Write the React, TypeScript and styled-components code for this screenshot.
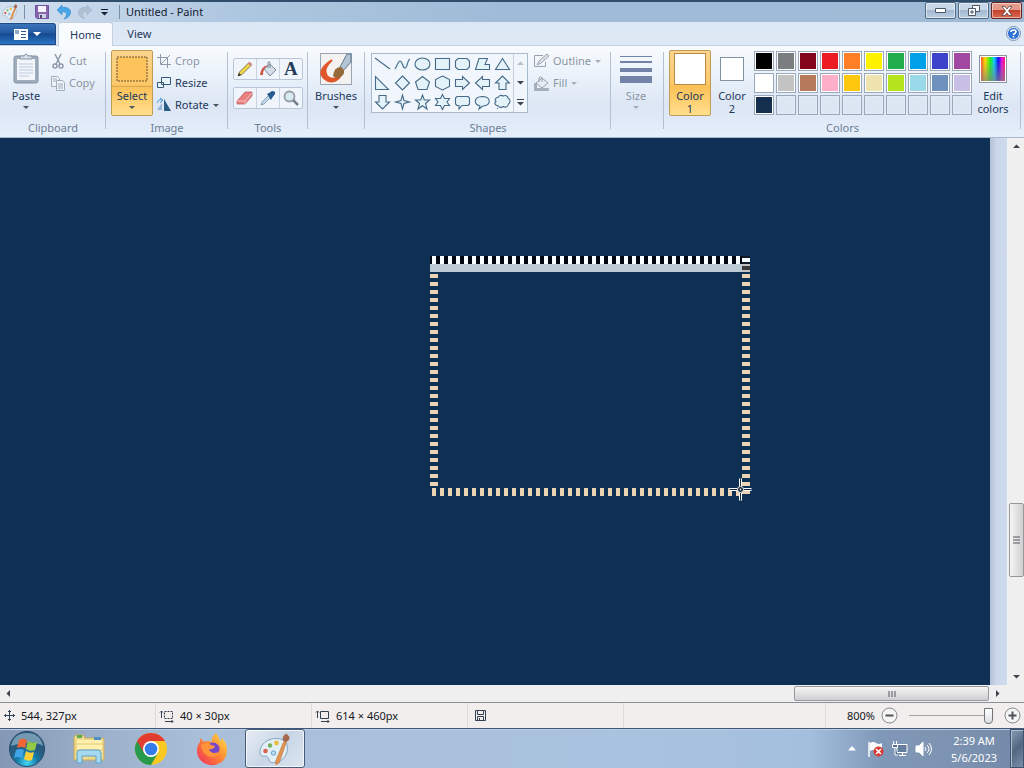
import React from 'react';
import styled, { createGlobalStyle, css } from 'styled-components';

const GlobalStyle = createGlobalStyle`
  *, *::before, *::after { box-sizing: border-box; }
  html, body, #root { height: 100%; margin: 0; }
  body { overflow: hidden; font: 11px/16px "Noto Sans", "Open Sans", sans-serif; color: #1e395b; }
  button, input { font: inherit; color: inherit; margin: 0; padding: 0; }
  button { background: none; border: 0; }
  svg { display: block; flex: none; overflow: visible; }
`;

const Screen = styled.div`
  display: flex;
  flex-direction: column;
  height: 100vh;
  background: #eff0f2;
`;

/* Title bar */
const TitleBar = styled.header`
  display: flex;
  align-items: center;
  height: 22px;
  flex: none;
  padding-left: 2px;
  background: linear-gradient(90deg, rgba(215,228,243,.9), rgba(190,211,233,.5) 22%, rgba(145,175,205,.1) 50%, rgba(160,185,212,.5) 100%), #a0bcd8;
  border-top: 2px solid #304d6c;
`;
const QuickButton = styled.button<{ $w: number }>`
  display: flex;
  align-items: center;
  justify-content: center;
  width: ${p => p.$w}px;
  height: 18px;
`;
const QuickRule = styled.span`
  width: 1px;
  height: 14px;
  background: #7890a9;
  margin: 0 6px;
`;
const Title = styled.h1`
  flex: 1;
  margin: 0;
  font-size: 11px;
  line-height: 18px;
  font-weight: 400;
  color: #13202f;
`;
const WindowButtons = styled.div`
  display: flex;
  align-items: flex-start;
  height: 20px;
  gap: 2px;
  padding-right: 2px;
`;
const WindowButton = styled.button<{ $close?: boolean }>`
  display: flex;
  align-items: center;
  justify-content: center;
  width: 31px;
  height: 17px;
  border: 1px solid #526b87;
  border-radius: 2px;
  box-shadow: inset 0 0 0 1px rgba(255,255,255,.5);
  background: linear-gradient(#c8d8e8 45%, #a2b8d0 50%, #bdd0e3);
  ${p => p.$close && css`
    border-color: #6b2520;
    background: linear-gradient(#e29a8c 45%, #c3402c 50%, #d96a51);
  `}
`;

/* Tabs */
const TabBar = styled.nav`
  display: flex;
  align-items: flex-end;
  height: 24px;
  flex: none;
  background: linear-gradient(#dbe7f4, #e0e9f6);
  border-bottom: 1px solid #c3d0e0;
`;
const FileTab = styled.button`
  display: flex;
  align-items: center;
  justify-content: center;
  gap: 5px;
  width: 56px;
  height: 22px;
  border: 1px solid #1e4a86;
  border-left: 0;
  border-radius: 0 3px 0 0;
  background: linear-gradient(#3a74b8, #2358a0 45%, #164990 50%, #2b75c4);
`;
const Tab = styled.button<{ $active?: boolean }>`
  height: 23px;
  margin-left: 2px;
  padding: 0 11px;
  border-radius: 3px 3px 0 0;
  border: 1px solid transparent;
  border-bottom: 0;
  ${p => p.$active && css`
    margin-bottom: -1px;
    height: 24px;
    border-color: #c3d0e0;
    background: #f9fcff;
  `}
`;
const HelpButton = styled.button`
  margin: 0 3px 4px auto;
`;

/* Ribbon */
const Ribbon = styled.div`
  display: flex;
  height: 92px;
  flex: none;
  padding-top: 3px;
  background: linear-gradient(#f8fbfe, #e9f1fa 35%, #dce6f4 65%, #e5eefb);
  border-bottom: 1px solid #a9b8ca;
`;
const Group = styled.section<{ $w: number }>`
  display: flex;
  flex-direction: column;
  width: ${p => p.$w}px;
  flex: none;
  position: relative;
  &::after {
    content: "";
    position: absolute;
    right: 0;
    top: 3px;
    bottom: 8px;
    width: 1px;
    background: #b3c0d1;
  }
`;
const GroupBody = styled.div<{ $pad?: number; $gap?: number }>`
  display: flex;
  align-items: flex-start;
  height: 71px;
  padding: 1px 0 0 ${p => p.$pad ?? 5}px;
  gap: ${p => p.$gap ?? 4}px;
`;
const GroupLabel = styled.h2`
  margin: 0;
  font-size: 11px;
  line-height: 16px;
  font-weight: 400;
  text-align: center;
  color: #6b7d95;
`;
const BigButton = styled.button<{ $active?: boolean; $muted?: boolean; $w?: number }>`
  display: flex;
  flex-direction: column;
  align-items: center;
  width: ${p => p.$w ?? 42}px;
  height: 66px;
  border: 1px solid transparent;
  border-radius: 2px;
  line-height: 13px;
  ${p => p.$muted && css`color: #8b95a3;`}
  ${p => p.$active && css`
    border-color: #c29b54;
    background: linear-gradient(#fbd48e, #fcc96c 50%, #fbc057 55%, #ffdf8d);
  `}
`;
const BigIcon = styled.span<{ $rule?: boolean }>`
  display: flex;
  align-items: center;
  justify-content: center;
  width: 100%;
  height: 36px;
  margin-bottom: 2px;
  ${p => p.$rule && css`border-bottom: 1px solid #d6a95a;`}
`;
const ButtonCaption = styled.span`
  text-align: center;
  line-height: 13px;
`;
const Arrow = styled.span<{ $muted?: boolean; $light?: boolean }>`
  display: inline-block;
  width: 0;
  height: 0;
  border: ${p => (p.$light ? 4 : 3)}px solid transparent;
  border-bottom: 0;
  border-top-color: ${p => (p.$light ? '#fff' : p.$muted ? '#a5adb8' : '#4c5563')};
`;
const BigArrow = styled(Arrow)`
  margin-top: 4px;
`;
const Stack = styled.div`
  display: flex;
  flex-direction: column;
`;
const SmallButton = styled.button<{ $muted?: boolean }>`
  display: flex;
  align-items: center;
  gap: 4px;
  height: 22px;
  white-space: nowrap;
  ${p => p.$muted && css`color: #8b95a3;`}
`;
const ToolGrid = styled.div`
  display: flex;
  flex-direction: column;
  gap: 7px;
  padding-top: 8px;
`;
const ToolRow = styled.div`
  display: flex;
  border: 1px solid #b8c6d8;
  border-radius: 2px;
  background: #f0f5fb;
`;
const ToolButton = styled.button`
  display: flex;
  align-items: center;
  justify-content: center;
  width: 22px;
  height: 20px;
  & + & { width: 23px; border-left: 1px solid #c9d4e2; }
`;
const BrushFrame = styled.span`
  display: block;
  width: 32px;
  height: 32px;
  border: 1px solid #9aa5b4;
  background: #f4f2f0;
`;
const Gallery = styled.div`
  display: flex;
  width: 157px;
  height: 60px;
  margin-top: 3px;
  border: 1px solid #a9bacd;
  background: #f0f6fc;
`;
const ShapeGrid = styled.div`
  display: grid;
  grid-template-columns: repeat(7, 20px);
  grid-template-rows: repeat(3, 19px);
  flex: 1;
`;
const ShapeButton = styled.button`
  display: flex;
  align-items: center;
  justify-content: center;
`;
const GalleryScroll = styled.div`
  display: grid;
  grid-template-rows: repeat(3, 1fr);
  width: 14px;
  border-left: 1px solid #c3d0de;
`;
const ScrollStep = styled.button`
  display: flex;
  align-items: center;
  justify-content: center;
`;
const ColorChip = styled.span<{ $size: number; $active?: boolean }>`
  width: ${p => p.$size}px;
  height: ${p => p.$size}px;
  border: 1px solid ${p => (p.$active ? '#b88a46' : '#8391a5')};
  background: #fff;
`;
const Palette = styled.div`
  display: grid;
  grid-template-columns: repeat(10, 20px);
  grid-auto-rows: 20px;
  gap: 2px;
  padding: 1px 0 0 1px;
`;
const Swatch = styled.button<{ $color?: string }>`
  border: 1px solid #9aa8ba;
  background: ${p => p.$color ?? '#dde6f3'};
  box-shadow: inset 0 0 0 1px ${p => (p.$color ? '#fff' : '#e3ebf6')};
`;
const Rainbow = styled.span`
  width: 28px;
  height: 28px;
  border: 1px solid #8c939e;
  box-shadow: inset 0 0 0 1px #fff;
  background: linear-gradient(transparent 20%, rgba(128,128,128,.75)), linear-gradient(90deg, #f33, #fd0 20%, #2e2 40%, #1cf 55%, #11e 70%, #e1d 85%, #f24);
`;

/* Work area */
const WorkArea = styled.main`
  display: flex;
  flex: 1;
  min-height: 0;
`;
const Canvas = styled.div`
  position: relative;
  flex: 1;
  overflow: hidden;
  background: #0e3055;
`;
const CanvasDrawing = styled.svg`
  position: absolute;
  left: 430px;
  top: 118px;
`;
const CanvasMargin = styled.div`
  width: 18px;
  border-right: 1px solid #eef3fa;
  background: linear-gradient(90deg, #b2c1d6, #cad6e9 35%, #cfdbed);
`;
const VScroll = styled.div`
  display: flex;
  flex-direction: column;
  align-items: center;
  width: 16px;
  background: #f0f0f1;
`;
const Spacer = styled.div<{ $grow: number }>`
  flex: ${p => p.$grow} 1 0;
`;
const ScrollArrow = styled.button`
  display: flex;
  align-items: center;
  justify-content: center;
  width: 17px;
  height: 17px;
`;
const VThumb = styled.button`
  display: flex;
  align-items: center;
  justify-content: center;
  width: 15px;
  height: 74px;
  border: 1px solid #989898;
  border-radius: 2px;
  background: linear-gradient(90deg, #f5f5f5, #e3e3e4 50%, #cfcfd2);
`;
const HScroll = styled.div`
  display: flex;
  align-items: center;
  height: 17px;
  flex: none;
  padding-right: 18px;
  background: #efeff0;
`;
const HThumb = styled.button`
  display: flex;
  align-items: center;
  justify-content: center;
  width: 195px;
  height: 15px;
  border: 1px solid #989898;
  border-radius: 2px;
  background: linear-gradient(#f5f5f5, #e3e3e4 50%, #cfcfd2);
`;

/* Status bar */
const StatusBar = styled.footer`
  display: flex;
  height: 26px;
  flex: none;
  border-top: 1px solid #898f96;
  background: #f1eeed;
  color: #15181e;
`;
const StatusCell = styled.div<{ $w?: number }>`
  display: flex;
  align-items: center;
  gap: 6px;
  ${p => (p.$w ? css`width: ${p.$w}px;` : css`flex: 1;`)}
  padding-left: 4px;
  border-right: 1px solid #dddcdd;
`;
const ZoomBar = styled.div`
  display: flex;
  align-items: center;
  justify-content: flex-end;
  gap: 6px;
  width: 198px;
  padding-right: 3px;
`;
const ZoomSlider = styled.input`
  appearance: none;
  width: 84px;
  height: 18px;
  margin: 0 5px;
  background: linear-gradient(#a5a5a8, #a5a5a8) center / 100% 1px no-repeat;
  &::-webkit-slider-thumb {
    appearance: none;
    width: 9px;
    height: 16px;
    border: 1px solid #707276;
    border-radius: 1px 1px 5px 5px;
    background: linear-gradient(#fff, #dadcdf);
  }
`;

/* Taskbar */
const Taskbar = styled.footer`
  display: flex;
  align-items: stretch;
  height: 40px;
  flex: none;
  border-top: 1px solid #3d587a;
  box-shadow: inset 0 1px 0 #bdccde;
  background: linear-gradient(90deg, #8497b4, #9bafca 9%, #a9bfda 20%, #a9c2df 60%, #a4bfde 79%, #8098b8 86%, #7c92b0 94%, #7188a8);
`;
const TaskButton = styled.button<{ $active?: boolean; $w: number }>`
  display: flex;
  align-items: center;
  justify-content: center;
  width: ${p => p.$w}px;
  border: 1px solid transparent;
  border-radius: 3px;
  ${p => p.$active && css`
    border-color: #465c78;
    box-shadow: inset 0 0 0 1px rgba(255,255,255,.7);
    background: linear-gradient(135deg, #e7edf5, #c9d6e6 50%, #dce5f0);
  `}
`;
const Tray = styled.div`
  display: flex;
  align-items: center;
  gap: 8px;
  margin-left: auto;
`;
const TrayButton = styled.button`
  display: flex;
  align-items: center;
  justify-content: center;
  width: 16px;
  height: 24px;
`;
const Clock = styled.time`
  width: 68px;
  text-align: center;
  line-height: 17px;
  color: #fff;
`;
const ShowDesktop = styled.button`
  width: 14px;
  height: 39px;
  margin-left: -6px;
  border: 1px solid #3f536d;
  box-shadow: inset 1px 1px 0 #aebccf;
  background: linear-gradient(135deg, #8b9db6, #52667f 50%, #7c90ad);
`;

const PaletteIcon = ({ size }: { size: number }) => (
  <svg width={size} height={size} viewBox="0 0 32 32">
    <path d="M1 21C0 12 8 5 18 5.500c8 .5 12 6 10 13-2 8-9 12.500-16 11-3-1-1-4-4-6-2-1-5 1-7-2.500z" fill="#e3eff7" stroke="#84a5c0" />
    <circle cx="6.500" cy="18" r="2.300" fill="#d6614c" />
    <circle cx="11" cy="12.500" r="2.200" fill="#7ab05c" />
    <circle cx="17.500" cy="10" r="2.400" fill="#e9bf44" />
    <circle cx="14.500" cy="20" r="2.200" fill="#b5def3" stroke="#6ba6cc" />
    <path d="M25 8l2.500 1L20 30l-3 1.500-.5-3z" fill="#e59350" stroke="#b7713c" strokeWidth=".6" />
    <path d="M24 7c-1-3 1-5.500 4-6.500 0 2 3 2 2.500 5-.5 2-3 3.500-4 3.500z" fill="#a5684c" />
  </svg>
);

const Outline = ({ d }: { d: string }) => (
  <svg width="17" height="16" viewBox="0 0 17 16" fill="#e4f3f9" stroke="#466a87" strokeWidth="1.1">
    <path d={d} />
  </svg>
);

const shapes: [string, string][] = [
  ['Line', 'M1 2L16 13'],
  ['Curve', 'M1 13C3 10 4 5 6 5C9 5 8 12 11 12C14 12 13 4 16 3M16 3'],
  ['Oval', 'M1 8a7.5 6 0 0 1 15 0a7.5 6 0 0 1-15 0z'],
  ['Rectangle', 'M1.500 2.500h14v11h-14z'],
  ['Rounded rectangle', 'M4 2.500h9l2.500 2.500v6L13 13.500H4L1.500 11V5z'],
  ['Polygon', 'M5 2.500h8.500l-2.500 6h4.500v5h-14z'],
  ['Triangle', 'M8.500 2.500l7 11h-14z'],
  ['Right triangle', 'M1.500 1.500v13h13z'],
  ['Diamond', 'M8.500 1L15.500 8L8.500 15L1.500 8z'],
  ['Pentagon', 'M8.500 1.500L15.500 7L13 14.500H4L1.500 7z'],
  ['Hexagon', 'M8.500 1L15.500 4.500V11.500L8.500 15L1.500 11.500V4.500z'],
  ['Right arrow', 'M1.500 4.500H8.500V1.500L15.500 8L8.500 14.500V11.500H1.500z'],
  ['Left arrow', 'M15.500 4.500H8.500V1.500L1.500 8L8.500 14.500V11.500H15.500z'],
  ['Up arrow', 'M5 14.500V8H1.500L8.500 1L15.500 8H12V14.500z'],
  ['Down arrow', 'M5 1.500V8H1.500L8.500 15L15.500 8H12V1.500z'],
  ['Four-point star', 'M8.500 1L10 6.500L15.500 8L10 9.500L8.500 15L7 9.500L1.500 8L7 6.500z'],
  ['Five-point star', 'M8.500 1L10.300 6H15.500L11.500 9.500L13 15L8.500 11.700L4 15L5.500 9.500L1.500 6H6.700z'],
  ['Six-point star', 'M8.500 .5L10.500 4.500H15.500L13 8L15.500 11.500H10.500L8.500 15.500L6.500 11.500H1.500L4 8L1.500 4.500H6.500z'],
  ['Rectangular callout', 'M3 2.500H14L15.500 4V10L14 11.500H8L5 15V11.500H3L1.500 10V4z'],
  ['Oval callout', 'M6 12C-1 10 0 3 8 2.500C17 2.500 18 11.500 9 12L5 15z'],
  ['Cloud callout', 'M4 3.500C5 1 8 1 9 2C11 1 14 1.500 14 4C17 5.500 16 9 14.500 10C14 13.500 11 13.500 9.500 12.500C8 14 5 13.500 4.500 12C1 12 0 9 2 7.500C0 5.500 2 3.500 4 3.500zM3 14.500h1'],
];

const colors = [
  '#000000', '#7b7e80', '#84041b', '#ec1c24', '#ff7f27', '#fff200', '#22ae4c', '#00a1e8', '#3e43cc', '#a248a3',
  '#ffffff', '#c3c3c4', '#b67a5a', '#ffaec9', '#ffc70e', '#efe3b0', '#b5e41d', '#99d9ea', '#6f91bd', '#c7bfe6',
  '#15304f',
];

const ArrowGlyph = ({ turn, muted }: { turn: number; muted?: boolean }) => (
  <svg width="7" height="7" viewBox="0 0 7 7">
    <path d="M0 2h7L3.500 5.500z" fill={muted ? '#b6bfca' : '#3d444e'} transform={`rotate(${turn} 3.500 3.500)`} />
  </svg>
);

const Selection = () => (
  <CanvasDrawing width="322" height="244" viewBox="0 0 322 244" role="img" aria-label="Dashed selection">
    <defs>
      <pattern id="across" width="8" height="8" patternUnits="userSpaceOnUse">
        <rect x="2" width="4" height="8" fill="#ebd3b4" />
      </pattern>
      <pattern id="down" width="8" height="8" patternUnits="userSpaceOnUse">
        <rect y="2" width="8" height="4" fill="#ebd3b4" />
      </pattern>
      <pattern id="active" width="8" height="8" patternUnits="userSpaceOnUse">
        <rect width="8" height="8" fill="#020714" />
        <rect x="2" width="4" height="8" fill="#f7fcff" />
      </pattern>
    </defs>
    <g shapeRendering="crispEdges">
      <rect width="312" height="8" fill="url(#active)" />
      <rect y="8" width="312" height="8" fill="#bccad5" />
      <path d="M312 0h8v16h-8z" fill="#111a27" />
      <path d="M312 2h8v4h-8z" fill="#f7fcff" />
      <path d="M312 8h8v2h-8zM312 14h8v2h-8z" fill="#c2c2c3" />
      <path d="M312 10h8v4h-8z" fill="#39383a" />
      <rect y="16" width="8" height="216" fill="url(#down)" />
      <rect x="312" y="16" width="8" height="224" fill="url(#down)" />
      <rect y="232" width="312" height="8" fill="url(#across)" />
    </g>
    <g fill="none" transform="translate(310.500 233.500)">
      <path d="M0-11V-3M0 3V11M-11 0H-3M3 0H11" stroke="#fff" strokeWidth="3" />
      <path d="M0-11V-3M0 3V11M-11 0H-3M3 0H11" stroke="#102a48" strokeWidth="1" />
      <circle r="3" fill="#172536" stroke="#e9edf1" />
      <circle r="1" fill="#cfd6dd" />
    </g>
  </CanvasDrawing>
);

export default function App() {
  return (
    <>
      <GlobalStyle />
      <Screen>
        <TitleBar>
          <PaletteIcon size={16} />
          <QuickRule />
          <QuickButton $w={22} aria-label="Save">
            <svg width="14" height="14" viewBox="0 0 14 14"><path d="M.5 .5h13v13H2l-1.500-1.500z" fill="#8965ae" stroke="#6f55a0" /><path d="M3 1h8v6H3z" fill="#f5f4fb" /><path d="M4 9h7v4H4z" fill="#ccd5e6" /><path d="M5 10h2v3H5z" fill="#554270" /></svg>
          </QuickButton>
          <QuickButton $w={22} aria-label="Undo">
            <svg width="14" height="14" viewBox="0 0 14 14"><path d="M0 5L5 0v2.500c10-2 12 9 2 11.500 4-4 3-8-2-7v3z" fill="#47a5e8" stroke="#3a8acb" strokeWidth=".6" /></svg>
          </QuickButton>
          <QuickButton $w={20} aria-label="Redo">
            <svg width="14" height="14" viewBox="0 0 14 14"><path d="M14 5L9 0v2.500C-1 .5-3 11.500 7 14 3 10 4 6 9 7v3z" fill="#afc0d2" stroke="#a1b4c9" strokeWidth=".6" /></svg>
          </QuickButton>
          <QuickButton $w={18} aria-label="Customize toolbar">
            <svg width="7" height="7" viewBox="0 0 7 7" fill="#172333"><path d="M0 0h7v1H0zM0 3h7L3.500 6.500z" /></svg>
          </QuickButton>
          <QuickRule />
          <Title>Untitled - Paint</Title>
          <WindowButtons>
            <WindowButton aria-label="Minimize"><svg width="11" height="5" viewBox="0 0 11 5"><path d="M.5 .5h10v4H.5z" fill="#fff" stroke="#4c5968" /></svg></WindowButton>
            <WindowButton aria-label="Restore"><svg width="12" height="11" viewBox="0 0 12 11" fill="#f6f8fa" stroke="#4c5968"><path d="M4.500 .5h7v6h-7z" /><path d="M.5 3.500h7v7h-7zM3 6h2v2H3z" /></svg></WindowButton>
            <WindowButton $close aria-label="Close"><svg width="12" height="10" viewBox="0 0 12 10"><path d="M1 .5h3l2 2.500L8 .5h3L7.500 5 11 9.500H8L6 7 4 9.500H1L4.500 5z" fill="#fff" stroke="#5d4649" strokeWidth=".8" /></svg></WindowButton>
          </WindowButtons>
        </TitleBar>

        <TabBar>
          <FileTab aria-label="Paint menu">
            <svg width="14" height="11" viewBox="0 0 14 11"><path d="M0 0h14v11H0z" fill="#fff" /><path d="M1 2h4M1 4h4M7 2.500h5M7 5.500h5M7 8.500h5" stroke="#2b5792" /></svg>
            <Arrow $light />
          </FileTab>
          <Tab $active>Home</Tab>
          <Tab>View</Tab>
          <HelpButton aria-label="Help">
            <svg width="15" height="15" viewBox="0 0 15 15" fill="none"><circle cx="7.500" cy="7.500" r="6" fill="#2e6fd5" stroke="#e5eefb" /><circle cx="7.500" cy="7.500" r="7" stroke="#7c96bb" /><path d="M5 6Q5 4 7.500 4Q10 4 10 5.500Q10 7 7.500 8.500V9M7.500 10v1.500" stroke="#fff" strokeWidth="1.600" /></svg>
          </HelpButton>
        </TabBar>

        <Ribbon>
          <Group $w={106}>
            <GroupBody $pad={5}>
              <BigButton>
                <BigIcon><svg width="26" height="32" viewBox="0 0 26 32"><rect x="1" y="3" width="24" height="27" rx="2" fill="#9facbb" stroke="#8493a6" /><path d="M4 6h18v21H4z" fill="#f2f6fb" /><path d="M6 11h14M6 14h14M6 17h14M6 20h14M6 23h10" stroke="#bdcadc" /><path d="M7 6V3h4q2-4 4 0h4v3z" fill="#d6dee8" stroke="#8794a6" /></svg></BigIcon>
                <ButtonCaption>Paste</ButtonCaption><BigArrow />
              </BigButton>
              <Stack>
                <SmallButton $muted><svg width="14" height="16" viewBox="0 0 14 16" fill="none" stroke="#8e9aaa" strokeWidth="1.500"><path d="M4 1l5 10M10 1L5 11" /><circle cx="4" cy="13" r="2" /><circle cx="10" cy="13" r="2" /></svg>Cut</SmallButton>
                <SmallButton $muted><svg width="14" height="16" viewBox="0 0 14 16" fill="#edf2f8" stroke="#a0adbd"><path d="M.5 1.500h6l2 2v8h-8zM2 4h4M2 6h4" /><path d="M5.500 5.500h6l2 2v8h-8zM7 9h5M7 11h5M7 13h5" /></svg>Copy</SmallButton>
              </Stack>
            </GroupBody>
            <GroupLabel>Clipboard</GroupLabel>
          </Group>

          <Group $w={122}>
            <GroupBody $pad={5}>
              <BigButton $active>
                <BigIcon $rule><svg width="32" height="26" viewBox="0 0 32 26"><path d="M1 1h30v24H1z" fill="#ffc35c" stroke="#67502c" strokeDasharray="2 1" /></svg></BigIcon>
                <ButtonCaption>Select</ButtonCaption><BigArrow />
              </BigButton>
              <Stack>
                <SmallButton $muted><svg width="14" height="14" viewBox="0 0 14 14" fill="none" stroke="#8e9aaa"><path d="M3.500 0v10.500H14M0 3.500h10.500V14M4 10L13 1" /></svg>Crop</SmallButton>
                <SmallButton><svg width="14" height="14" viewBox="0 0 14 14" fill="#eaf3fa" stroke="#355877"><path d="M4.500 1.500h9v7h-9zM.5 6.500h6v5h-6z" /></svg>Resize</SmallButton>
                <SmallButton><svg width="14" height="14" viewBox="0 0 14 14"><path d="M0 12L5 5v7z" fill="#94b6d3" /><path d="M7 1l7 12H7z" fill="#285e86" /><path d="M0 5Q1 1 5 2M3 0l3 2-3 3" fill="none" stroke="#4b95d1" /></svg>Rotate<Arrow /></SmallButton>
              </Stack>
            </GroupBody>
            <GroupLabel>Image</GroupLabel>
          </Group>

          <Group $w={80}>
            <GroupBody $pad={5}>
              <ToolGrid>
                <ToolRow>
                  <ToolButton aria-label="Pencil"><svg width="16" height="16" viewBox="0 0 16 16"><path d="M1 15l1.500-4L12 1.500l2.500 2.500L5 13.500z" fill="#f0d549" stroke="#6d6338" strokeWidth=".8" /><path d="M11 2.500l2-1.500 2 2-1.500 2z" fill="#d77b7b" /><path d="M1 15l1-3 2 2z" fill="#222" /></svg></ToolButton>
                  <ToolButton aria-label="Fill with color"><svg width="17" height="16" viewBox="0 0 17 16"><path d="M4 8l6-5 6 6-6 6z" fill="#d3dee8" stroke="#7d90a3" /><path d="M8 7V2Q9-1 10 2v5" fill="none" stroke="#7c8995" /><path d="M0 14Q1 5 8 4Q3 7 3 14z" fill="#d05546" /></svg></ToolButton>
                  <ToolButton aria-label="Text"><svg width="16" height="16" viewBox="0 0 16 16" fontFamily="Liberation Serif, serif" fontWeight="700" fontSize="19" fill="#243d59"><text x="1" y="14">A</text></svg></ToolButton>
                </ToolRow>
                <ToolRow>
                  <ToolButton aria-label="Eraser"><svg width="16" height="16" viewBox="0 0 16 16"><path d="M0 11L8 2h7v4L8 14H0z" fill="#e9807f" stroke="#b6555c" strokeWidth=".7" /><path d="M0 11h8l7-8M8 11v3" fill="none" stroke="#f6c0c0" /></svg></ToolButton>
                  <ToolButton aria-label="Color picker"><svg width="16" height="16" viewBox="0 0 16 16"><path d="M1 15l1-3 7-7 2 2-7 7z" fill="#c0d9eb" stroke="#65869e" strokeWidth=".7" /><path d="M7 4l2-1 3-2q4 0 3 3l-3 4-1 2z" fill="#275a91" /></svg></ToolButton>
                  <ToolButton aria-label="Magnifier"><svg width="16" height="16" viewBox="0 0 16 16"><circle cx="6.500" cy="6.500" r="5" fill="#d9eaf3" stroke="#969ca3" strokeWidth="1.800" /><path d="M10 10l5 5" stroke="#777f89" strokeWidth="2.500" /></svg></ToolButton>
                </ToolRow>
              </ToolGrid>
            </GroupBody>
            <GroupLabel>Tools</GroupLabel>
          </Group>

          <Group $w={57}>
            <GroupBody $pad={3}>
              <BigButton $w={50}>
                <BigIcon><BrushFrame><svg width="30" height="30" viewBox="0 0 30 30"><path d="M11 6Q-6 17 4 25Q11 31 19 23Q10 27 6 22Q1 15 11 6z" fill="#e0562b" stroke="#e0562b" strokeWidth="2" /><path d="M19 13L26 0h4v8l-8 9z" fill="#b3c4d3" stroke="#61798e" /><path d="M12 22Q13 13 20 13q5 3 2 8-5 6-10 1z" fill="#94693c" /></svg></BrushFrame></BigIcon>
                <ButtonCaption>Brushes</ButtonCaption><BigArrow />
              </BigButton>
            </GroupBody>
            <GroupLabel />
          </Group>

          <Group $w={246}>
            <GroupBody $pad={6} $gap={6}>
              <Gallery>
                <ShapeGrid>
                  {shapes.map(([name, d]) => (
                    <ShapeButton key={name} aria-label={name}><Outline d={d} /></ShapeButton>
                  ))}
                </ShapeGrid>
                <GalleryScroll>
                  <ScrollStep aria-label="Previous shapes"><ArrowGlyph turn={180} muted /></ScrollStep>
                  <ScrollStep aria-label="Next shapes"><ArrowGlyph turn={0} /></ScrollStep>
                  <ScrollStep aria-label="All shapes"><svg width="7" height="7" viewBox="0 0 7 7" fill="#3d444e"><path d="M0 0h7v1H0zM0 3h7L3.500 6.500z" /></svg></ScrollStep>
                </GalleryScroll>
              </Gallery>
              <Stack>
                <SmallButton $muted><svg width="15" height="14" viewBox="0 0 15 14" fill="none" stroke="#98a2af"><path d="M9 1.500H.5v11h11V8" /><path d="M3 11l2-4L13 0l2 2-8 7z" fill="#dbe2eb" /></svg>Outline<Arrow $muted /></SmallButton>
                <SmallButton $muted><svg width="15" height="15" viewBox="0 0 15 15"><path d="M2 7l6-5 6 5-6 5z" fill="#e5ebf2" stroke="#98a2af" /><path d="M5 6V2q2-3 3 0v4" fill="none" stroke="#98a2af" /><path d="M0 12h15v3H0zM0 7h3v5H0z" fill="#a3afbd" /></svg>Fill<Arrow $muted /></SmallButton>
              </Stack>
            </GroupBody>
            <GroupLabel>Shapes</GroupLabel>
          </Group>

          <Group $w={53}>
            <GroupBody $pad={4}>
              <BigButton $muted>
                <BigIcon><svg width="32" height="28" viewBox="0 0 32 28" fill="#7482a8"><path d="M0 1h32v1H0zM0 6h32v2H0zM0 13h32v4H0zM0 21h32v7H0z" /></svg></BigIcon>
                <ButtonCaption>Size</ButtonCaption><BigArrow $muted />
              </BigButton>
            </GroupBody>
            <GroupLabel />
          </Group>

          <Group $w={357}>
            <GroupBody $pad={5} $gap={0}>
              <BigButton $active>
                <BigIcon><ColorChip $size={32} $active /></BigIcon>
                <ButtonCaption>Color<br />1</ButtonCaption>
              </BigButton>
              <BigButton>
                <BigIcon><ColorChip $size={24} /></BigIcon>
                <ButtonCaption>Color<br />2</ButtonCaption>
              </BigButton>
              <Palette>
                {Array.from({ length: 30 }, (_, i) => (
                  <Swatch key={i} $color={colors[i]} aria-label={colors[i] ?? 'Empty color'} />
                ))}
              </Palette>
              <BigButton>
                <BigIcon><Rainbow /></BigIcon>
                <ButtonCaption>Edit<br />colors</ButtonCaption>
              </BigButton>
            </GroupBody>
            <GroupLabel>Colors</GroupLabel>
          </Group>
        </Ribbon>

        <WorkArea>
          <Canvas><Selection /></Canvas>
          <CanvasMargin />
          <VScroll>
            <ScrollArrow aria-label="Scroll up"><ArrowGlyph turn={180} /></ScrollArrow>
            <Spacer $grow={348} />
            <VThumb aria-label="Vertical scroll position"><svg width="7" height="8" viewBox="0 0 7 8"><path d="M0 1h7M0 4h7M0 7h7" stroke="#52565c" /></svg></VThumb>
            <Spacer $grow={91} />
            <ScrollArrow aria-label="Scroll down"><ArrowGlyph turn={0} /></ScrollArrow>
          </VScroll>
        </WorkArea>
        <HScroll>
          <ScrollArrow aria-label="Scroll left"><ArrowGlyph turn={90} /></ScrollArrow>
          <Spacer $grow={1} />
          <HThumb aria-label="Horizontal scroll position"><svg width="8" height="6" viewBox="0 0 8 6"><path d="M1 0v6M4 0v6M7 0v6" stroke="#52565c" /></svg></HThumb>
          <ScrollArrow aria-label="Scroll right"><ArrowGlyph turn={270} /></ScrollArrow>
        </HScroll>

        <StatusBar>
          <StatusCell $w={156}><svg width="11" height="11" viewBox="0 0 11 11" fill="none" stroke="#344054"><path d="M5.500 0v11M0 5.500h11M4 2l1.500-1.500L7 2M4 9l1.500 1.500L7 9M2 4L.5 5.500 2 7M9 4l1.500 1.500L9 7" /></svg>544, 327px</StatusCell>
          <StatusCell $w={156}><svg width="14" height="12" viewBox="0 0 14 12" fill="none" stroke="#344054"><path d="M1.500 1v7M0 2.500L1.500 1 3 2.500M5 11.500h8M11.500 10l1.500 1.500-1.500 1.500" /><path d="M4.500 1.500h8v7h-8z" strokeDasharray="2 1" /></svg>40 × 30px</StatusCell>
          <StatusCell $w={156}><svg width="14" height="12" viewBox="0 0 14 12" fill="none" stroke="#344054"><path d="M1.500 1v7M0 2.500L1.500 1 3 2.500M5 11.500h8M11.500 10l1.500 1.500-1.500 1.500M4.500 1.500h8v7h-8z" /></svg>614 × 460px</StatusCell>
          <StatusCell $w={156}><svg width="18" height="11" viewBox="0 0 18 11" fill="none" stroke="#344054"><path d="M3.500 .5h10v10h-10zM5.500 .5v4h6v-4M5.500 10.500v-4h6v4M7.500 8v2.500" /></svg></StatusCell>
          <StatusCell />
          <ZoomBar>
            <span>800%</span>
            <button aria-label="Zoom out"><svg width="17" height="17" viewBox="0 0 17 17" fill="none"><circle cx="8.500" cy="8.500" r="7.500" fill="#f5f5f6" stroke="#83868c" /><path d="M4.500 8.500h8" stroke="#4f545b" strokeWidth="2" /></svg></button>
            <ZoomSlider type="range" aria-label="Zoom level" defaultValue={100} />
            <button aria-label="Zoom in"><svg width="17" height="17" viewBox="0 0 17 17" fill="none"><circle cx="8.500" cy="8.500" r="7.500" fill="#f5f5f6" stroke="#83868c" /><path d="M4.500 8.500h8M8.500 4.500v8" stroke="#4f545b" strokeWidth="2" /></svg></button>
          </ZoomBar>
        </StatusBar>

        <Taskbar>
          <TaskButton $w={54} aria-label="Start">
            <svg width="36" height="36" viewBox="0 0 36 36">
              <defs><radialGradient id="orb" cy=".9"><stop stopColor="#42d7f4" /><stop offset=".6" stopColor="#167aa8" /><stop offset="1" stopColor="#285b80" /></radialGradient></defs>
              <circle cx="18" cy="18" r="17.500" fill="url(#orb)" stroke="#254a6b" />
              <path d="M2 15Q5 2 18 2t16 13Q24 8 2 15z" fill="#b3ccdd" opacity=".55" />
              <path d="M10 9q4-3 8 0l-2 8q-4-2-8 0z" fill="#ef6535" />
              <path d="M19 10q4 3 9 1l-2 8q-5 2-9-1z" fill="#94c947" />
              <path d="M7 19q4-2 8 0l-2 8q-4-2-8 0z" fill="#41a4e8" />
              <path d="M17 20q4 3 8 1l-2 8q-4 2-8-1z" fill="#ffcf3a" />
            </svg>
          </TaskButton>
          <TaskButton $w={70} aria-label="File Explorer">
            <svg width="34" height="30" viewBox="0 0 34 30"><path d="M2 26V3l2-2h7l2 3h18l1 2v20z" fill="#efd98b" stroke="#c9ad5e" /><path d="M5 6h25v16H5z" fill="#fff0af" /><path d="M3 10h28M3 16h28" stroke="#dfc774" /><path d="M5 1h5v3H5z" fill="#56ac4c" /><path d="M22 3h7v3h-7z" fill="#4a91c8" /><path d="M5 29V19q0-3 3-3h18q3 0 3 3v10h-5v-7H10v7z" fill="#a4d9ef" stroke="#5ca2c9" /></svg>
          </TaskButton>
          <TaskButton $w={54} aria-label="Chrome">
            <svg width="32" height="32" viewBox="0 0 32 32"><circle cx="16" cy="16" r="16" fill="#f9c922" /><path d="M2.100 8A16 16 0 0 0 16 32L23 20L16 16z" fill="#279a4b" /><path d="M2.100 8A16 16 0 0 1 29.900 8H16L9 20z" fill="#e23b30" /><circle cx="16" cy="16" r="8" fill="#fff" /><circle cx="16" cy="16" r="6.300" fill="#347de9" /></svg>
          </TaskButton>
          <TaskButton $w={67} aria-label="Firefox">
            <svg width="32" height="32" viewBox="0 0 32 32"><defs><linearGradient id="fire" x1="1" y1="0" x2="0" y2="1"><stop stopColor="#ffe646" /><stop offset=".5" stopColor="#ff8434" /><stop offset="1" stopColor="#ed295f" /></linearGradient></defs><path d="M20 0q3 4 4 8 2-1 2-3 5 5 5 12c0 20-29 20-30 1Q1 12 4 9V5l4 4q4-2 8 0-1-5 4-9z" fill="url(#fire)" /><circle cx="17" cy="16" r="6.500" fill="#7647c9" /><path d="M5 12q7-4 10 0l4 1q-2 4-6 3 2 6 10 3-3 7-11 4-6-3-7-11z" fill="#ff943c" /></svg>
          </TaskButton>
          <TaskButton $active $w={60} aria-label="Paint"><PaletteIcon size={32} /></TaskButton>
          <Tray>
            <TrayButton aria-label="Show hidden icons"><svg width="8" height="5" viewBox="0 0 8 5"><path d="M0 4.500L4 0l4 4.500z" fill="#fff" /></svg></TrayButton>
            <TrayButton aria-label="Action Center"><svg width="16" height="16" viewBox="0 0 16 16"><path d="M1 1v15" stroke="#fff" strokeWidth="1.500" /><path d="M2 2q3-2 6 0t6 0v8q-3 2-6 0t-6 0z" fill="#fff" /><circle cx="10.500" cy="10.500" r="5" fill="#d93732" /><path d="M8 8l5 5M13 8l-5 5" stroke="#fff" strokeWidth="1.600" /></svg></TrayButton>
            <TrayButton aria-label="Network"><svg width="16" height="16" viewBox="0 0 16 16" fill="none" stroke="#fff"><path d="M5 3.500h10v8H5zM7 14.500h7M10.500 12v2" fill="#647e9d" /><path d="M1.500 0v3M4.500 0v3M.5 3.500h5v3h-5zM3 7v7h3" fill="#536f8e" /></svg></TrayButton>
            <TrayButton aria-label="Volume"><svg width="16" height="16" viewBox="0 0 16 16" fill="none" stroke="#fff"><path d="M0 5h3l4-4v14l-4-4H0z" fill="#fff" /><path d="M9 6q2 2 0 4M11 4q4 4 0 8M13 2q5 6 0 12" /></svg></TrayButton>
            <Clock>2:39 AM<br />5/6/2023</Clock>
            <ShowDesktop aria-label="Show desktop" />
          </Tray>
        </Taskbar>
      </Screen>
    </>
  );
}
